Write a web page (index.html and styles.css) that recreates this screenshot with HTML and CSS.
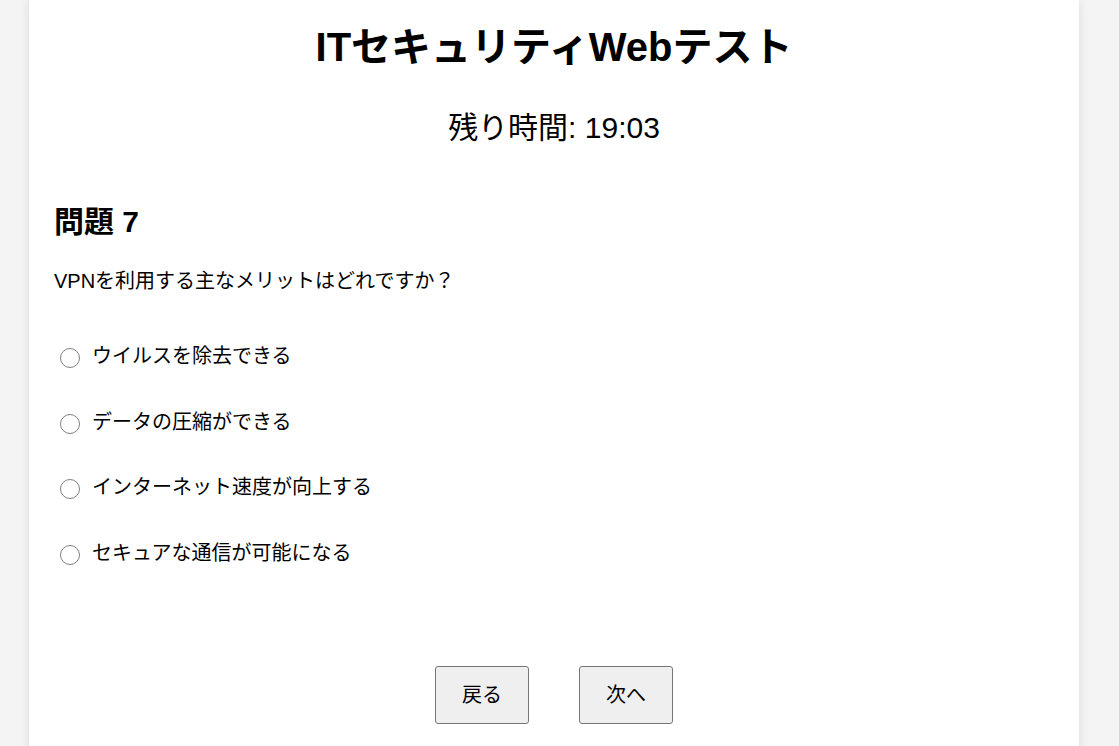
FILE: index.html
```html
<!DOCTYPE html>
<html lang="ja">
<head>
    <meta charset="UTF-8">
    <meta name="viewport" content="width=device-width, initial-scale=1.0">
    <title>ITセキュリティWebテスト</title>
    <link rel="stylesheet" href="styles.css">
</head>
<body>
    <div class="container">
        <h1>ITセキュリティWebテスト</h1>
        <div class="timer">残り時間: <span id="time">19:03</span></div>

        <div class="question">
            <h2>問題 7</h2>
            <p class="question-text">VPNを利用する主なメリットはどれですか？</p>

            <div class="options">
                <label class="option"><input type="radio" name="q7" value="0"><span>ウイルスを除去できる</span></label>
                <label class="option"><input type="radio" name="q7" value="1"><span>データの圧縮ができる</span></label>
                <label class="option"><input type="radio" name="q7" value="2"><span>インターネット速度が向上する</span></label>
                <label class="option"><input type="radio" name="q7" value="3"><span>セキュアな通信が可能になる</span></label>
            </div>
        </div>

        <div class="nav">
            <button class="nav-btn">戻る</button>
            <button class="nav-btn">次へ</button>
        </div>
    </div>
</body>
</html>
```

FILE: styles.css
```css
* {
    box-sizing: border-box;
}

body {
    margin: 0;
    padding: 0 11px 0 0;
    font-family: "Liberation Sans", "Noto Sans CJK JP", sans-serif;
    font-size: 20px;
    color: #000;
    background-color: #f4f4f4;
}

.container {
    max-width: 1050px;
    margin: 0 auto;
    padding: 23px 25px 40px;
    background-color: white;
    box-shadow: 0 0 10px rgba(0, 0, 0, 0.1);
}

h1 {
    margin: 0;
    font-size: 40px;
    line-height: 48px;
    text-align: center;
}

.timer {
    margin-top: 39px;
    font-size: 30px;
    line-height: 36px;
    text-align: center;
}

h2 {
    margin: 58px 0 0;
    font-size: 30px;
    line-height: 36px;
}

.question-text {
    margin: 29px 0 0;
    font-size: 20px;
    line-height: 24px;
}

.options {
    display: flex;
    flex-direction: column;
    gap: 41.5px;
    margin-top: 51px;
}

.option {
    display: flex;
    align-items: center;
    gap: 12px;
    line-height: 24px;
    cursor: pointer;
}

.option input {
    appearance: none;
    flex: none;
    width: 20px;
    height: 20px;
    margin: 4px 0 0 6px;
    border: 1.5px solid #808080;
    border-radius: 50%;
    background-color: white;
}

.option input:checked {
    border: 5px solid #0075ff;
}

.nav {
    display: flex;
    justify-content: center;
    gap: 50px;
    margin-top: 101px;
}

.nav-btn {
    padding: 16px 26px;
    font-family: inherit;
    font-size: 20px;
    line-height: 24px;
    color: #000;
    background-color: #efefef;
    border: 1px solid #767676;
    border-radius: 3px;
    cursor: pointer;
}
```
